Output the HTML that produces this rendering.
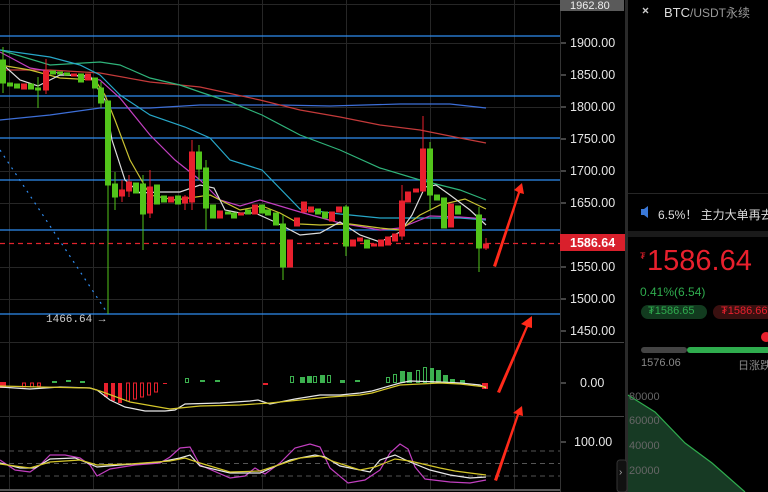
<!DOCTYPE html>
<html><head><meta charset="utf-8"><style>
html,body{margin:0;padding:0;background:#000;width:768px;height:492px;overflow:hidden;font-family:"Liberation Sans","Noto Sans CJK SC",sans-serif}
.ax{position:absolute;left:570px;color:#e6e6e6;font-size:12.5px;line-height:12px}
.t{position:absolute;white-space:nowrap}
</style></head><body>
<svg width="768" height="492" style="position:absolute;left:0;top:0">
<g stroke="#262626" stroke-width="1">
<line x1="9.5" y1="0" x2="9.5" y2="490"/><line x1="93.5" y1="0" x2="93.5" y2="490"/><line x1="178.5" y1="0" x2="178.5" y2="490"/><line x1="262.5" y1="0" x2="262.5" y2="490"/><line x1="346.5" y1="0" x2="346.5" y2="490"/><line x1="430.5" y1="0" x2="430.5" y2="490"/><line x1="514.5" y1="0" x2="514.5" y2="490"/>
<line x1="0" y1="43.5" x2="560" y2="43.5"/><line x1="0" y1="107.5" x2="560" y2="107.5"/><line x1="0" y1="171.5" x2="560" y2="171.5"/><line x1="0" y1="203.5" x2="560" y2="203.5"/><line x1="0" y1="267.5" x2="560" y2="267.5"/><line x1="0" y1="299.5" x2="560" y2="299.5"/><line x1="0" y1="342.5" x2="560" y2="342.5"/><line x1="0" y1="416.5" x2="560" y2="416.5"/><line x1="0" y1="4.5" x2="560" y2="4.5"/>
</g>
<line x1="0" y1="490" x2="560" y2="490" stroke="#555" stroke-width="2"/>
<g stroke="#2f8cf0" stroke-width="1.2">
<line x1="0" y1="36" x2="560" y2="36"/><line x1="0" y1="96" x2="560" y2="96"/><line x1="0" y1="138" x2="560" y2="138"/><line x1="0" y1="180" x2="560" y2="180"/><line x1="0" y1="230" x2="560" y2="230"/><line x1="0" y1="314" x2="560" y2="314"/>
</g>
<line x1="0" y1="243.5" x2="560" y2="243.5" stroke="#e0242c" stroke-width="1.3" stroke-dasharray="5,4"/>
<line x1="0" y1="150" x2="108" y2="314" stroke="#2f8cf0" stroke-dasharray="2,5" stroke-width="1.2"/>
<g fill="none" stroke-width="1.2">
<polyline stroke="#3d6fd8" points="0,120 50,115 100,108 150,108 200,105 280,105 330,106 400,104 450,104 486,108"/>
<polyline stroke="#c43a3a" points="0,70 50,70 100,73 150,82 200,87 260,100 300,110 340,117 380,125 420,130 460,138 486,143"/>
<polyline stroke="#2fb37a" points="0,50 50,65 100,62 120,65 150,78 180,85 200,92 230,102 262,115 300,135 340,150 380,168 420,180 460,190 486,200"/>
<polyline stroke="#27a7c8" points="0,50 50,57 80,65 100,75 120,95 150,115 185,127 210,138 230,160 262,170 300,209 340,214 380,218 420,218 460,218 486,220"/>
<polyline stroke="#c23fc0" points="0,52 30,68 60,73 100,80 120,98 150,135 175,160 200,180 220,200 240,206 260,200 300,212 340,223 380,230 400,228 430,216 460,217 486,219"/>
<polyline stroke="#c9c232" points="0,65 30,70 60,78 95,80 105,95 115,120 130,160 150,195 175,200 210,195 240,210 262,206 280,213 300,224 320,225 350,224 380,228 400,230 420,215 440,205 465,199 486,209"/>
<polyline stroke="#dcdcdc" points="0,62 20,80 38,86 60,75 90,76 105,100 112,140 125,180 140,193 160,192 180,192 200,185 214,188 225,210 240,213 255,213 275,222 300,235 320,233 340,222 360,235 380,242 400,232 412,215 425,187 436,185 450,195 470,210 486,225"/>
</g>
<g stroke-width="1">
<g stroke="#52c41a" fill="#52c41a">
<line x1="3" y1="47" x2="3" y2="93"/><rect x="0.5" y="60" width="5" height="23"/>
<rect x="7.5" y="83" width="5" height="3"/><rect x="14.5" y="84" width="5" height="4"/><rect x="28.5" y="84" width="5" height="5"/>
<line x1="38" y1="77" x2="38" y2="108"/><rect x="35.5" y="88" width="5" height="2"/>
<rect x="50.5" y="71" width="5" height="3"/><rect x="57.5" y="72" width="5" height="2"/><rect x="64.5" y="73" width="5" height="2"/><rect x="78.5" y="74" width="5" height="8"/>
<rect x="92.5" y="78" width="5" height="10"/><line x1="101" y1="82" x2="101" y2="108"/><rect x="98.5" y="88" width="5" height="15"/>
<line x1="108" y1="101" x2="108" y2="314"/><rect x="105.5" y="101" width="5" height="84"/>
<line x1="115" y1="172" x2="115" y2="210"/><rect x="112.5" y="184" width="5" height="13"/>
<rect x="133.5" y="183" width="5" height="10"/><line x1="143" y1="175" x2="143" y2="250"/><rect x="140.5" y="184" width="5" height="30"/>
<rect x="154.5" y="185" width="5" height="19"/><rect x="161.5" y="196" width="5" height="6"/><rect x="175.5" y="196" width="5" height="8"/>
<line x1="199" y1="145" x2="199" y2="180"/><rect x="196.5" y="152" width="5" height="17"/>
<line x1="206" y1="160" x2="206" y2="230"/><rect x="203.5" y="168" width="5" height="40"/>
<rect x="210.5" y="205" width="5" height="13"/><rect x="225.5" y="212" width="5" height="2"/><rect x="231.5" y="213" width="5" height="5"/><rect x="245.5" y="210" width="5" height="4"/><rect x="259.5" y="205" width="5" height="8"/>
<rect x="265.5" y="210" width="5" height="5"/><rect x="273.5" y="213" width="5" height="12"/>
<line x1="283" y1="215" x2="283" y2="280"/><rect x="280.5" y="224" width="5" height="43"/>
<rect x="315.5" y="209" width="5" height="5"/><rect x="322.5" y="212" width="5" height="6"/>
<line x1="346" y1="205" x2="346" y2="256"/><rect x="343.5" y="207" width="5" height="39"/>
<rect x="364.5" y="240" width="5" height="8"/>
<line x1="430" y1="142" x2="430" y2="210"/><rect x="427.5" y="149" width="5" height="46"/>
<rect x="434.5" y="195" width="5" height="5"/><rect x="441.5" y="198" width="5" height="30"/><rect x="455.5" y="206" width="5" height="8"/>
<line x1="479" y1="207" x2="479" y2="272"/><rect x="476.5" y="215" width="5" height="33"/>
</g>
<g stroke="#e8202d" fill="#e8202d">
<rect x="21.5" y="84" width="5" height="5"/><line x1="46" y1="59" x2="46" y2="94"/><rect x="43.5" y="71" width="5" height="19"/>
<rect x="71.5" y="74" width="5" height="2"/><rect x="85.5" y="74" width="5" height="6"/>
<line x1="122" y1="180" x2="122" y2="202"/><rect x="119.5" y="190" width="5" height="6"/><line x1="129" y1="175" x2="129" y2="197"/><rect x="126.5" y="182" width="5" height="9"/>
<line x1="150" y1="170" x2="150" y2="218"/><rect x="147.5" y="187" width="5" height="26"/><rect x="168.5" y="197" width="5" height="5"/>
<line x1="185" y1="195" x2="185" y2="210"/><rect x="182.5" y="197" width="5" height="6"/>
<line x1="192" y1="140" x2="192" y2="210"/><rect x="189.5" y="152" width="5" height="50"/>
<rect x="217.5" y="211" width="5" height="7"/><rect x="238.5" y="213" width="5" height="2"/><rect x="252.5" y="205" width="5" height="9"/>
<rect x="287.5" y="240" width="5" height="27"/><rect x="294.5" y="218" width="5" height="8"/><rect x="301.5" y="202" width="5" height="10"/><rect x="308.5" y="207" width="5" height="5"/>
<rect x="329.5" y="212" width="5" height="9"/><rect x="336.5" y="207" width="5" height="5"/>
<rect x="350.5" y="240" width="5" height="6"/><rect x="357.5" y="238" width="5" height="3"/><rect x="371.5" y="244" width="5" height="2"/><rect x="378.5" y="240" width="5" height="6"/><rect x="385.5" y="237" width="5" height="8"/><rect x="392.5" y="234" width="5" height="7"/>
<line x1="402" y1="185" x2="402" y2="240"/><rect x="399.5" y="201" width="5" height="35"/>
<rect x="405.5" y="192" width="5" height="10"/><rect x="413.5" y="189" width="5" height="3"/>
<line x1="423" y1="116" x2="423" y2="192"/><rect x="420.5" y="149" width="5" height="42"/>
<rect x="448.5" y="204" width="5" height="23"/><line x1="486" y1="238" x2="486" y2="250"/><rect x="483.5" y="244" width="5" height="4"/>
</g>
</g>
<g fill="#e8202d">
<rect x="0" y="382" width="6" height="6"/><rect x="104" y="383" width="4" height="14"/><rect x="111" y="383" width="4" height="18"/><rect x="118" y="383" width="4" height="20"/><rect x="163" y="383" width="4" height="1"/><rect x="263" y="383" width="5" height="2"/><rect x="482" y="383" width="6" height="6"/>
</g>
<g fill="none" stroke="#e8202d"><rect x="126.5" y="383" width="3" height="18"/><rect x="133.5" y="383" width="3" height="16"/><rect x="140.5" y="383" width="3" height="14"/><rect x="147.5" y="383" width="3" height="12"/><rect x="154.5" y="383" width="3" height="9"/><rect x="22.5" y="383" width="3" height="4"/><rect x="30.5" y="383" width="3" height="4"/><rect x="37.5" y="383" width="3" height="3"/></g>
<g fill="#3cb04f"><rect x="52" y="381" width="5" height="2"/><rect x="66" y="380" width="5" height="2"/><rect x="80" y="381" width="5" height="2"/><rect x="200" y="380" width="5" height="2"/><rect x="215" y="380" width="5" height="2"/><rect x="300" y="377" width="5" height="6"/><rect x="307" y="376" width="5" height="7"/><rect x="320" y="375" width="5" height="8"/><rect x="340" y="380" width="5" height="3"/><rect x="355" y="380" width="5" height="2"/><rect x="400" y="371" width="5" height="12"/><rect x="407" y="372" width="5" height="11"/><rect x="430" y="368" width="4" height="15"/><rect x="436" y="370" width="5" height="13"/><rect x="443" y="375" width="5" height="8"/><rect x="450" y="379" width="5" height="4"/><rect x="460" y="380" width="5" height="3"/></g>
<g fill="none" stroke="#3cb04f"><rect x="185.5" y="378.5" width="3" height="4"/><rect x="290.5" y="376.5" width="3" height="6"/><rect x="313.5" y="376.5" width="3" height="6"/><rect x="327.5" y="375.5" width="3" height="7"/><rect x="386.5" y="377.5" width="3" height="5"/><rect x="393.5" y="374.5" width="3" height="8"/><rect x="416.5" y="370.5" width="3" height="12"/><rect x="423.5" y="367.5" width="3" height="15"/></g>
<polyline fill="none" stroke="#e8e8e8" stroke-width="1.2" points="0,387 30,389 60,387 90,388 97,390 110,400 125,407 145,411 165,411 175,410 185,404 220,403 250,401 258,400 270,404 295,399 320,395 340,395 360,393 372,391 400,383 410,381 440,382 460,383 480,385 486,388"/>
<polyline fill="none" stroke="#d4c62a" stroke-width="1.2" points="0,386 40,387 90,388 100,391 130,402 170,409 200,406 240,405 270,403 300,400 330,397 360,395 372,393 400,385 420,384 440,383 460,384 486,387"/>
<g stroke="#555" stroke-dasharray="5,4"><line x1="0" y1="451" x2="560" y2="451"/><line x1="0" y1="463.5" x2="560" y2="463.5"/><line x1="0" y1="476" x2="560" y2="476"/></g>
<polyline fill="none" stroke="#c23fc0" stroke-width="1.2" points="0,460 15,470 30,472 40,465 50,455 65,455 80,458 90,465 97,476 110,469 135,465 160,463 170,457 180,448 190,447 200,465 230,478 245,476 255,468 265,474 280,463 295,448 310,444 320,447 330,468 348,483 365,480 380,470 390,453 400,444 408,449 415,467 425,479 450,482 470,483 486,480"/>
<polyline fill="none" stroke="#e8e8e8" stroke-width="1.2" points="0,463 20,468 35,468 50,459 75,458 90,464 97,467 120,465 160,462 180,458 190,455 200,466 230,473 260,473 290,460 315,455 325,457 340,466 370,472 380,460 395,455 410,462 430,470 450,475 470,478 486,477"/>
<polyline fill="none" stroke="#d4c62a" stroke-width="1.2" points="0,464 30,468 50,462 80,460 97,465 130,464 170,461 185,458 200,463 230,472 260,471 300,458 320,456 335,462 360,470 375,467 395,459 410,461 440,468 455,471 470,473 486,475"/>
<g fill="#ff2a1a">
<polygon points="493,266 518,192 514,190 522,183 524,194 520,193 496,267"/>
<polygon points="497,392 526,326 521,324 532,316 532,328 528,327 500,393"/>
<polygon points="494,480 517,414 513,413 522,406 523,416 519,415 497,481"/>
</g>
<line x1="560.5" y1="0" x2="560.5" y2="492" stroke="#333"/>
<g stroke="#888"><line x1="561" y1="43" x2="566" y2="43"/><line x1="561" y1="75" x2="566" y2="75"/><line x1="561" y1="107" x2="566" y2="107"/><line x1="561" y1="139" x2="566" y2="139"/><line x1="561" y1="171" x2="566" y2="171"/><line x1="561" y1="203" x2="566" y2="203"/><line x1="561" y1="267" x2="566" y2="267"/><line x1="561" y1="299" x2="566" y2="299"/><line x1="561" y1="331" x2="566" y2="331"/><line x1="561" y1="383" x2="566" y2="383"/><line x1="561" y1="442" x2="566" y2="442"/></g>
<line x1="560" y1="342.5" x2="624" y2="342.5" stroke="#444"/><line x1="560" y1="416.5" x2="624" y2="416.5" stroke="#444"/>
<rect x="560" y="0" width="64" height="11" fill="#5a5a5a"/>
<rect x="560" y="234" width="66" height="17" fill="#d9202c"/>
<rect x="625" y="0" width="3" height="492" fill="#2a2a2a"/>
<rect x="617" y="460" width="10" height="32" rx="3" fill="#111" stroke="#333"/>
<line x1="628" y1="193.5" x2="768" y2="193.5" stroke="#262626"/>
<rect x="628" y="231" width="140" height="6" fill="#1a1a1a"/>
<rect x="641" y="305" width="66" height="14" rx="7" fill="#123b1f"/>
<rect x="713" y="305" width="60" height="14" rx="7" fill="#3a1010"/>
<circle cx="766" cy="337" r="5" fill="#e8202d"/>
<rect x="641" y="347" width="46" height="6" rx="3" fill="#444"/>
<rect x="687" y="347" width="90" height="6" rx="3" fill="#2fac4e"/>
<path d="M628,395 L655,412 L685,443 L712,463 L745,492 L628,492 Z" fill="#173a24"/>
<polyline fill="none" stroke="#2fac4e" stroke-width="1.2" points="628,395 655,412 685,443 712,463 745,492"/>
<path d="M641,209 h3 l4,-3 v12 l-4,-3 h-3 z" fill="#3a78d8"/>
<g stroke="#ccc" stroke-width="1.3"><line x1="643" y1="8" x2="648" y2="13"/><line x1="648" y1="8" x2="643" y2="13"/></g>
</svg>
<div class="ax" style="top:0px;color:#eee;font-size:11px">1962.80</div>
<div class="ax" style="top:37px">1900.00</div>
<div class="ax" style="top:69px">1850.00</div>
<div class="ax" style="top:101px">1800.00</div>
<div class="ax" style="top:133px">1750.00</div>
<div class="ax" style="top:165px">1700.00</div>
<div class="ax" style="top:197px">1650.00</div>
<div class="ax" style="top:237px;color:#fff;font-weight:bold">1586.64</div>
<div class="ax" style="top:261px">1550.00</div>
<div class="ax" style="top:293px">1500.00</div>
<div class="ax" style="top:325px">1450.00</div>
<div class="ax" style="top:377px;left:580px">0.00</div>
<div class="ax" style="top:436px;left:574px">100.00</div>
<div class="t" style="left:46px;top:314px;color:#ccc;font-size:11px;font-family:'Liberation Mono',monospace">1466.64 →</div>
<div class="t" style="left:664px;top:4px;color:#ddd;font-size:13px">BTC<span style="color:#999;font-size:12px">/USDT永续</span></div>
<div class="t" style="left:658px;top:206px;color:#ddd;font-size:12px">6.5%！ 主力大单再去</div>
<div class="t" style="left:640px;top:251px;color:#e8202d;font-size:9px">₮</div>
<div class="t" style="left:647px;top:245px;color:#e8202d;font-size:29px">1586.64</div>
<div class="t" style="left:640px;top:285px;color:#2fac4e;font-size:12px">0.41%(6.54)</div>
<div class="t" style="left:648px;top:305px;color:#2fac4e;font-size:11px">₮1586.65</div>
<div class="t" style="left:721px;top:305px;color:#e8202d;font-size:11px">₮1586.66</div>
<div class="t" style="left:641px;top:357px;color:#888;font-size:11px">1576.06</div>
<div class="t" style="left:738px;top:357px;color:#888;font-size:11px">日涨跌</div>
<div class="t" style="left:629px;top:391px;color:#666;font-size:11px">80000</div>
<div class="t" style="left:629px;top:415px;color:#666;font-size:11px">60000</div>
<div class="t" style="left:629px;top:440px;color:#666;font-size:11px">40000</div>
<div class="t" style="left:629px;top:465px;color:#666;font-size:11px">20000</div>
<div class="t" style="left:619px;top:467px;color:#aaa;font-size:10px">›</div>
</body></html>
